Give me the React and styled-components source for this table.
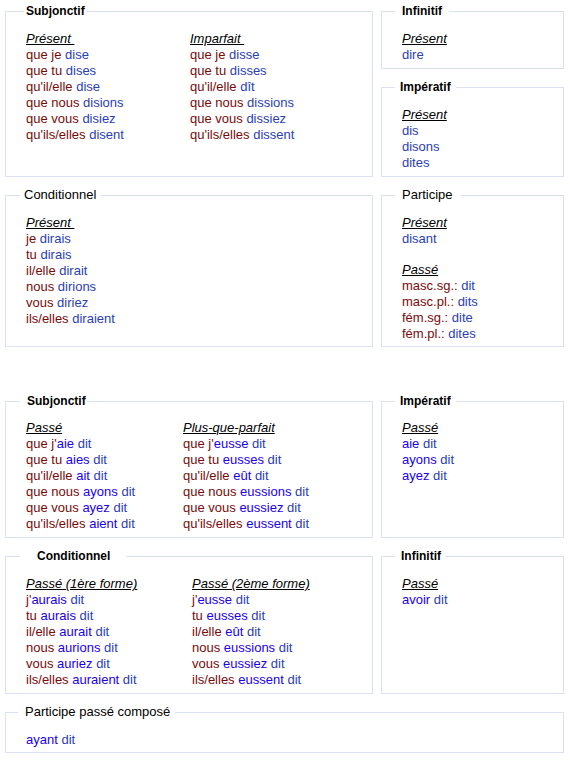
import React from 'react';
import styled, {createGlobalStyle} from 'styled-components';

const GlobalStyle = createGlobalStyle`
    body {
        margin: 0;
        background: #fff;
        font-family: "Liberation Sans", Arial, sans-serif;
        font-size: 13px;
        line-height: 16px;
        color: #000;
    }
`;

const Page = styled.div`
    display: flex;
    flex-direction: column;
    padding: 3px 0 0 5px;
`;

const Group = styled.div`
    display: grid;
    grid-template-columns: 368px 183px;
    column-gap: 8px;
    row-gap: 10px;
    margin-top: ${(props) => props.$top || 0}px;
`;

const Stack = styled.div`
    display: flex;
    flex-direction: column;
    gap: 10px;
`;

const Box = styled.fieldset`
    margin: 0;
    padding: 0;
    min-width: 0;
    border: 1px solid #dbe1f3;
    grid-column: ${(props) => (props.$wide ? '1 / -1' : 'auto')};
`;

const Legend = styled.legend`
    margin-left: ${(props) => props.$ml}px;
    padding: 0 ${(props) => props.$pr}px 0 ${(props) => props.$pl}px;
    font-size: ${(props) => (props.$bold ? '12px' : '13px')};
    font-weight: ${(props) => (props.$bold ? 'bold' : 'normal')};
    line-height: 16px;
    color: #000;
`;

const Body = styled.div`
    padding: ${(props) => props.$pt ?? 12}px 20px ${(props) => props.$pb ?? 5}px 20px;
`;

const Cols = styled.div`
    display: grid;
    grid-template-columns: ${(props) => props.$first}px auto;
`;

const Head = styled.div`
    white-space: pre;
    & > span {
        font-style: italic;
        text-decoration: underline;
    }
`;

const Line = styled.div`
    white-space: nowrap;
`;

const Spacer = styled.div`
    height: ${(props) => props.$h}px;
`;

const Pro = styled.span`
    color: #780a0a;
`;

const Verb = styled.span`
    color: #2b40b4;
`;

const Aux = styled.span`
    color: #1a00f0;
`;

// one conjugated form: [pronoun, auxiliary, verb]
const Form = ({f}) => (
    <Line>
        {f[0] && <Pro>{f[0]}</Pro>}
        {f[1] && <Aux>{f[1]}</Aux>}
        {f[1] && ' '}
        <Verb>{f[2]}</Verb>
    </Line>
);

const Tense = ({title, forms}) => (
    <div>
        <Head>
            <span>{title}</span>
        </Head>
        {forms.map((f, i) => (
            <Form key={i} f={f} />
        ))}
    </div>
);

const Field = ({legend, children, wide, pt, pb}) => (
    <Box $wide={wide}>
        <Legend $bold={legend.bold} $ml={legend.ml} $pl={legend.pl} $pr={legend.pr}>
            {legend.text}
        </Legend>
        <Body $pt={pt} $pb={pb}>{children}</Body>
    </Box>
);

const subjPresent = [
    ['que je ', '', 'dise'],
    ['que tu ', '', 'dises'],
    ["qu'il/elle ", '', 'dise'],
    ['que nous ', '', 'disions'],
    ['que vous ', '', 'disiez'],
    ["qu'ils/elles ", '', 'disent']
];
const subjImparfait = [
    ['que je ', '', 'disse'],
    ['que tu ', '', 'disses'],
    ["qu'il/elle ", '', 'dît'],
    ['que nous ', '', 'dissions'],
    ['que vous ', '', 'dissiez'],
    ["qu'ils/elles ", '', 'dissent']
];
const condPresent = [
    ['je ', '', 'dirais'],
    ['tu ', '', 'dirais'],
    ['il/elle ', '', 'dirait'],
    ['nous ', '', 'dirions'],
    ['vous ', '', 'diriez'],
    ['ils/elles ', '', 'diraient']
];
const subjPasse = [
    ["que j'", 'aie', 'dit'],
    ['que tu ', 'aies', 'dit'],
    ["qu'il/elle ", 'ait', 'dit'],
    ['que nous ', 'ayons', 'dit'],
    ['que vous ', 'ayez', 'dit'],
    ["qu'ils/elles ", 'aient', 'dit']
];
const subjPqp = [
    ["que j'", 'eusse', 'dit'],
    ['que tu ', 'eusses', 'dit'],
    ["qu'il/elle ", 'eût', 'dit'],
    ['que nous ', 'eussions', 'dit'],
    ['que vous ', 'eussiez', 'dit'],
    ["qu'ils/elles ", 'eussent', 'dit']
];
const condPasse1 = [
    ["j'", 'aurais', 'dit'],
    ['tu ', 'aurais', 'dit'],
    ['il/elle ', 'aurait', 'dit'],
    ['nous ', 'aurions', 'dit'],
    ['vous ', 'auriez', 'dit'],
    ['ils/elles ', 'auraient', 'dit']
];
const condPasse2 = [
    ["j'", 'eusse', 'dit'],
    ['tu ', 'eusses', 'dit'],
    ['il/elle ', 'eût', 'dit'],
    ['nous ', 'eussions', 'dit'],
    ['vous ', 'eussiez', 'dit'],
    ['ils/elles ', 'eussent', 'dit']
];

const App = () => {
    return (
        <Page>
            <GlobalStyle />
            <Group>
                <Field legend={{text: 'Subjonctif', bold: true, ml: 18, pl: 2, pr: 2}}>
                    <Cols $first={164}>
                        <Tense title="Présent " forms={subjPresent} />
                        <Tense title="Imparfait " forms={subjImparfait} />
                    </Cols>
                </Field>
                <Stack>
                    <Field legend={{text: 'Infinitif', bold: true, ml: 13, pl: 7, pr: 7}}>
                        <Tense title="Présent" forms={[['', '', 'dire']]} />
                    </Field>
                    <Field legend={{text: 'Impératif', bold: true, ml: 13, pl: 5, pr: 5}}>
                        <Tense title="Présent" forms={[['', '', 'dis'], ['', '', 'disons'], ['', '', 'dites']]} />
                    </Field>
                </Stack>
                <Field legend={{text: 'Conditionnel', ml: 14, pl: 4, pr: 5}}>
                    <Tense title="Présent " forms={condPresent} />
                </Field>
                <Field legend={{text: 'Participe', ml: 13, pl: 7, pr: 8}} pb={4}>
                    <Tense title="Présent" forms={[['', '', 'disant']]} />
                    <Spacer $h={15} />
                    <Tense
                        title="Passé"
                        forms={[
                            ['masc.sg.: ', '', 'dit'],
                            ['masc.pl.: ', '', 'dits'],
                            ['fém.sg.: ', '', 'dite'],
                            ['fém.pl.: ', '', 'dites']
                        ]}
                    />
                </Field>
            </Group>

            <Group $top={46}>
                <Field legend={{text: 'Subjonctif', bold: true, ml: 14, pl: 7, pr: 1}} pt={11}>
                    <Cols $first={157}>
                        <Tense title="Passé" forms={subjPasse} />
                        <Tense title="Plus-que-parfait" forms={subjPqp} />
                    </Cols>
                </Field>
                <Field legend={{text: 'Impératif', bold: true, ml: 13, pl: 5, pr: 5}} pt={11}>
                    <Tense title="Passé" forms={[['', 'aie', 'dit'], ['', 'ayons', 'dit'], ['', 'ayez', 'dit']]} />
                </Field>
                <Field legend={{text: 'Conditionnel', bold: true, ml: 14, pl: 17, pr: 16}}>
                    <Cols $first={166}>
                        <Tense title="Passé (1ère forme)" forms={condPasse1} />
                        <Tense title="Passé (2ème forme)" forms={condPasse2} />
                    </Cols>
                </Field>
                <Field legend={{text: 'Infinitif', bold: true, ml: 13, pl: 6, pr: 5}}>
                    <Tense title="Passé" forms={[['', 'avoir', 'dit']]} />
                </Field>
                <Field wide legend={{text: 'Participe passé composé', ml: 12, pl: 7, pr: 5}} pb={4}>
                    <Form f={['', 'ayant', 'dit']} />
                </Field>
            </Group>
        </Page>
    );
};

export default App;
